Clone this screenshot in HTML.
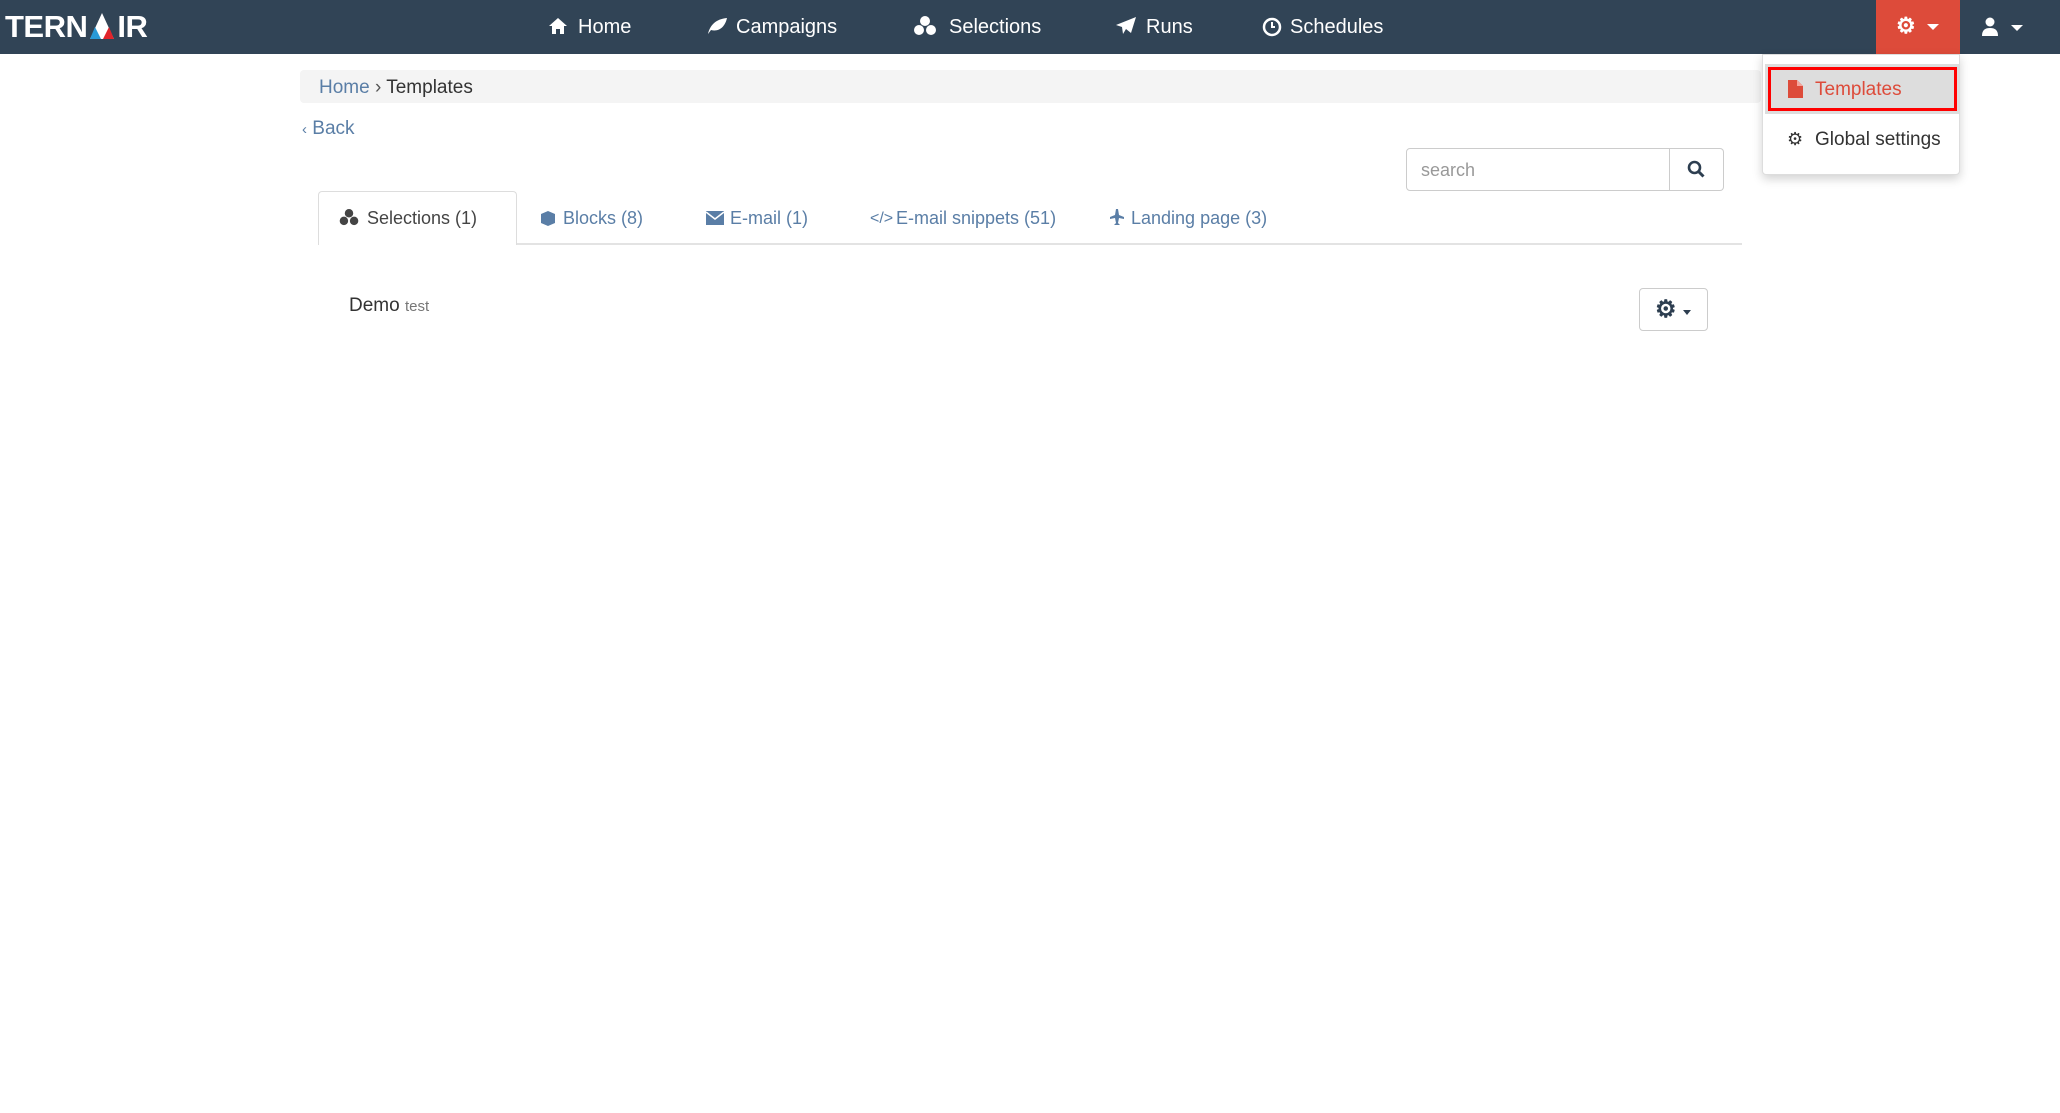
<!DOCTYPE html>
<html><head><meta charset="utf-8"><style>
*{box-sizing:border-box;margin:0;padding:0}
body{width:2060px;height:1113px;background:#fff;font-family:"Liberation Sans",sans-serif;color:#333;position:relative;overflow:hidden}
.nav{position:absolute;left:0;top:0;width:2060px;height:54px;background:#314456}
.ab{position:absolute;white-space:nowrap}
.nt{color:#fff;font-size:20px;top:16px}
.logo{left:5px;top:9px;color:#fff;font-weight:bold;font-size:31px;letter-spacing:-0.5px;font-family:"Liberation Sans",sans-serif}
.red{position:absolute;left:1876px;top:0;width:84px;height:56px;background:#dd4b3a}
.bc{position:absolute;left:300px;top:70px;width:1461px;height:33px;background:#f4f4f4;border-radius:4px}
.lnk{color:#5a7ea6}
.tabline{position:absolute;left:318px;top:243px;width:1424px;height:2px;background:#e3e3e3}
.tab{position:absolute;left:318px;top:191px;width:199px;height:54px;background:#fff;border:1px solid #ddd;border-bottom:none;border-radius:4px 4px 0 0}
.tt{font-size:18px;top:208px;color:#5a7ea6}
.dd{position:absolute;left:1762px;top:54px;width:198px;height:121px;background:#fff;border:1px solid #ddd;border-radius:0 0 4px 4px;box-shadow:0 4px 10px rgba(0,0,0,.18)}
</style></head><body>
<div class="nav"></div>
<div class="ab logo">TERN<span style="display:inline-block;width:30px;height:26px;position:relative;vertical-align:-2px"><svg width="30" height="26" viewBox="0 0 30 26"><polygon points="15,0 27,26 3,26" fill="#fff"/><polygon points="8,14 14,26 3,26" fill="#2a9ad8"/><polygon points="22,14 27,26 16,26" fill="#e0242b"/></svg></span>IR</div>
<svg class="ab" style="left:548px;top:17px" width="20" height="18" viewBox="0 0 20 18"><path d="M10 1L1 9h3v8h4v-5h4v5h4V9h3z" fill="#fff"/></svg>
<div class="ab nt" style="left:578px">Home</div>
<svg class="ab" style="left:706px;top:17px" width="22" height="18" viewBox="0 0 22 18"><path d="M2 17C4 8 10 2 21 1 19 10 13 15 5 13Z" fill="#fff"/></svg>
<div class="ab nt" style="left:736px">Campaigns</div>
<svg class="ab" style="left:912px;top:15px" width="26" height="22" viewBox="0 0 26 22"><circle cx="13" cy="6" r="5" fill="#fff"/><circle cx="7" cy="15" r="5" fill="#fff"/><circle cx="19" cy="15" r="5" fill="#fff"/></svg>
<div class="ab nt" style="left:949px">Selections</div>
<svg class="ab" style="left:1115px;top:16px" width="22" height="20" viewBox="0 0 22 20"><path d="M21 1L1 9l6 2 1 7 3-5 5 4z" fill="#fff"/></svg>
<div class="ab nt" style="left:1146px">Runs</div>
<svg class="ab" style="left:1262px;top:17px" width="20" height="20" viewBox="0 0 20 20"><circle cx="10" cy="10" r="8" fill="none" stroke="#fff" stroke-width="2.5"/><path d="M10 5v5h3" stroke="#fff" stroke-width="2" fill="none"/></svg>
<div class="ab nt" style="left:1290px">Schedules</div>
<div class="red"></div>
<div class="ab" style="left:1896px;top:13px;color:#fff;font-size:22px;font-weight:bold">⚙</div>
<div class="ab" style="left:1927px;top:24px;width:0;height:0;border-left:6px solid transparent;border-right:6px solid transparent;border-top:6px solid #fff"></div>
<svg class="ab" style="left:1982px;top:17px" width="16" height="20" viewBox="0 0 16 20"><circle cx="8" cy="5" r="4.5" fill="#fff"/><path d="M0 19c0-6 3-8 8-8s8 2 8 8z" fill="#fff"/></svg>
<div class="ab" style="left:2011px;top:25px;width:0;height:0;border-left:6px solid transparent;border-right:6px solid transparent;border-top:6px solid #fff"></div>

<div class="bc"></div>
<div class="ab" style="left:319px;top:77px;font-size:19px"><span class="lnk">Home</span> <span style="color:#555">›</span> <span style="color:#333">Templates</span></div>
<div class="ab lnk" style="left:302px;top:118px;font-size:19px"><span style="font-size:15px">‹</span> Back</div>

<div class="ab" style="left:1406px;top:148px;width:264px;height:43px;border:1px solid #ccc;border-radius:4px 0 0 4px;padding:11px 14px;font-size:18px;color:#999">search</div>
<div class="ab" style="left:1669px;top:148px;width:55px;height:43px;border:1px solid #ccc;border-left:none;border-radius:0 4px 4px 0"></div>
<svg class="ab" style="left:1687px;top:160px" width="18" height="19" viewBox="0 0 18 19"><circle cx="7.5" cy="7.5" r="5.5" fill="none" stroke="#2d3e50" stroke-width="2.6"/><path d="M11.5 11.5l5 5" stroke="#2d3e50" stroke-width="3"/></svg>

<div class="tabline"></div>
<div class="tab"></div>
<svg class="ab" style="left:338px;top:208px" width="22" height="19" viewBox="0 0 26 22"><circle cx="13" cy="6" r="5" fill="#444"/><circle cx="7" cy="15" r="5" fill="#444"/><circle cx="19" cy="15" r="5" fill="#444"/></svg>
<div class="ab tt" style="left:367px;color:#444">Selections (1)</div>
<svg class="ab" style="left:540px;top:210px" width="16" height="17" viewBox="0 0 16 17"><path d="M8 1l7 3v9l-7 3-7-3V4z" fill="#5a7ea6"/></svg>
<div class="ab tt" style="left:563px">Blocks (8)</div>
<svg class="ab" style="left:706px;top:211px" width="18" height="14" viewBox="0 0 18 14"><rect width="18" height="14" fill="#5a7ea6"/><path d="M0 1l9 7 9-7" stroke="#fff" stroke-width="1.5" fill="none"/></svg>
<div class="ab tt" style="left:730px">E-mail (1)</div>
<div class="ab tt" style="left:870px;font-size:16px;top:210px">&lt;/&gt;</div>
<div class="ab tt" style="left:896px">E-mail snippets (51)</div>
<svg class="ab" style="left:1109px;top:208px" width="16" height="18" viewBox="0 0 16 18"><path d="M7 1h2l1 6 5 2v2l-5-1-1 5 2 2H5l2-2-1-5-5 1V9l5-2z" fill="#5a7ea6"/></svg>
<div class="ab tt" style="left:1131px">Landing page (3)</div>

<div class="ab" style="left:349px;top:295px;font-size:19px;color:#333">Demo <span style="font-size:15px;color:#777">test</span></div>
<div class="ab" style="left:1639px;top:288px;width:69px;height:43px;border:1px solid #ccc;border-radius:4px;background:#fff"></div>
<div class="ab" style="left:1655px;top:295px;font-size:24px;color:#2d3e50;font-weight:bold">⚙</div>
<div class="ab" style="left:1683px;top:310px;width:0;height:0;border-left:4px solid transparent;border-right:4px solid transparent;border-top:5px solid #2d3e50"></div>

<div class="dd"></div>
<div class="ab" style="left:1765px;top:64px;width:194px;height:50px;background:#ddd"></div>
<div class="ab" style="left:1768px;top:67px;width:189px;height:44px;border:3px solid #f00"></div>
<svg class="ab" style="left:1788px;top:80px" width="15" height="18" viewBox="0 0 15 18"><path d="M0 0h9l6 6v12H0z" fill="#dd4b3a"/><path d="M9 0v6h6" fill="#f4a59c"/></svg>
<div class="ab" style="left:1815px;top:79px;font-size:19px;color:#dd4b3a">Templates</div>
<div class="ab" style="left:1787px;top:129px;font-size:18px;color:#333">⚙</div>
<div class="ab" style="left:1815px;top:129px;font-size:19px;color:#333">Global settings</div>
</body></html>
